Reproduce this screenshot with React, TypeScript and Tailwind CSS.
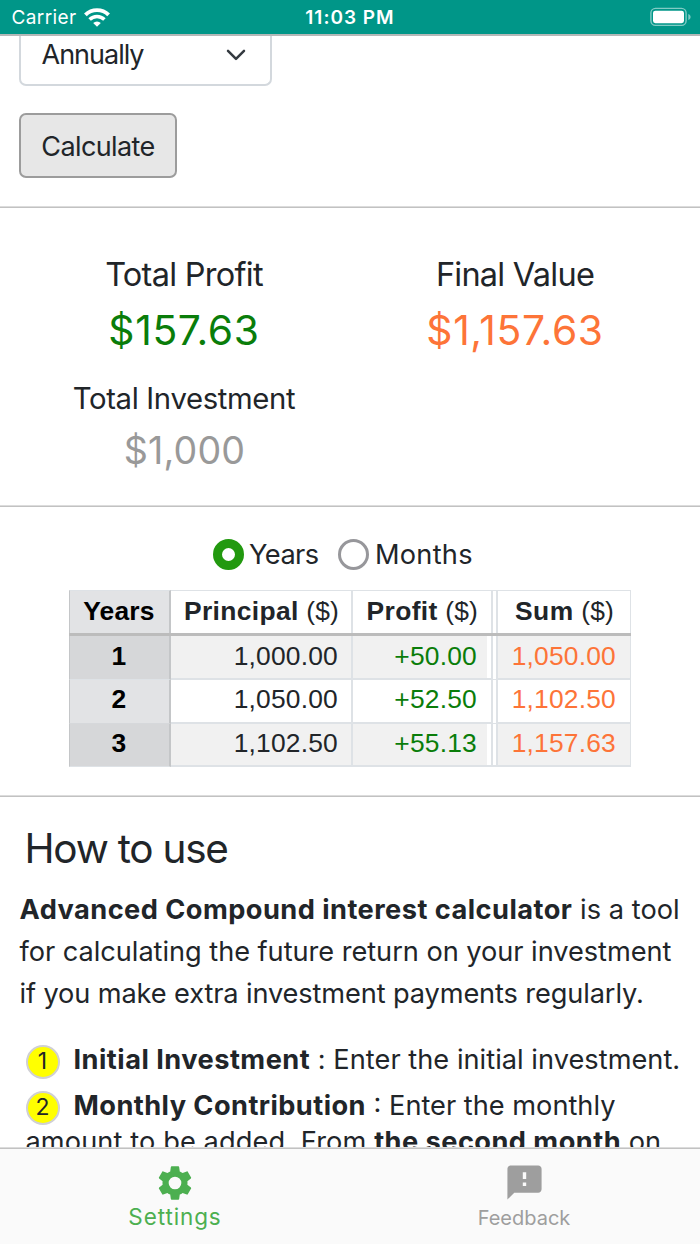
import { MdFeedback } from "react-icons/md";

type Row = { n: string; principal: string; profit: string; sum: string };

const rows: Row[] = [
  { n: "1", principal: "1,000.00", profit: "+50.00", sum: "1,050.00" },
  { n: "2", principal: "1,050.00", profit: "+52.50", sum: "1,102.50" },
  { n: "3", principal: "1,102.50", profit: "+55.13", sum: "1,157.63" },
];

function StatusBar() {
  return (
    <header className="grid h-9 shrink-0 grid-cols-3 items-center border-b-2 border-[#b4b8b8] bg-[#009688] text-[19px] text-white">
      <div className="flex items-center gap-2 pt-[2px] pl-[11.5px]">
        <span className="tracking-[0.4px]">Carrier</span>
        <svg width="26" height="19" viewBox="0 0 26 19" className="-mt-[2px] -ml-px" fill="none">
          <path d="M1.4 6.9a16.6 16.6 0 0 1 23.2 0" stroke="white" strokeWidth="3.9" />
          <path d="M5.6 11.5a10.5 10.5 0 0 1 14.8 0" stroke="white" strokeWidth="3.5" />
          <path d="M13 18.8l-3.8-3.7a5.4 5.4 0 0 1 7.6 0z" fill="white" />
        </svg>
      </div>
      <span className="pt-[3px] text-center text-[19px] font-semibold tracking-[1px]">11:03 PM</span>
      <svg width="42" height="20" viewBox="0 0 42 20" className="mr-[8px] justify-self-end" fill="none">
        <rect x="0.9" y="1.4" width="35.2" height="17" rx="4.6" stroke="white" strokeOpacity="0.5" strokeWidth="1.4" />
        <rect x="3" y="3.7" width="31" height="12.5" rx="2.4" fill="white" />
        <path d="M38.3 6.9c3 1 3 5 0 6z" fill="white" fillOpacity="0.5" />
      </svg>
    </header>
  );
}

function Rule() {
  return <div className="h-[2px] border-t border-b border-t-[#dcdcdc] border-b-[#c2c2c2]" />;
}

function Marker({ n }: { n: string }) {
  return (
    <span className="mt-[4px] flex h-[34px] w-[34px] items-center justify-center rounded-full border-2 border-[#d0d0d4] bg-[#ffff00] pb-px text-[23px]">
      {n}
    </span>
  );
}

function GearIcon() {
  return (
    <svg width="40" height="40" viewBox="0 0 24 24" fill="currentColor">
      <path
        fillRule="evenodd"
        d="M19.43 12.98c.04-.32.07-.64.07-.98s-.03-.66-.07-.98l2.11-1.65c.19-.15.24-.42.12-.64l-2-3.46c-.12-.22-.39-.3-.61-.22l-2.49 1c-.52-.4-1.08-.73-1.69-.98l-.38-2.65A.488.488 0 0 0 14 2h-4c-.25 0-.46.18-.49.42l-.38 2.65c-.61.25-1.17.59-1.69.98l-2.49-1c-.23-.09-.49 0-.61.22l-2 3.46c-.13.22-.07.49.12.64l2.11 1.65c-.04.32-.07.65-.07.98s.03.66.07.98l-2.11 1.65c-.19.15-.24.42-.12.64l2 3.46c.12.22.39.3.61.22l2.49-1c.52.4 1.08.73 1.69.98l.38 2.65c.03.24.24.42.49.42h4c.25 0 .46-.18.49-.42l.38-2.65c.61-.25 1.17-.59 1.69-.98l2.49 1c.23.09.49 0 .61-.22l2-3.46c.12-.22.07-.49-.12-.64l-2.11-1.65zM12 15.8a3.8 3.8 0 1 1 0-7.6 3.8 3.8 0 0 1 0 7.6z"
      />
    </svg>
  );
}

function Table() {
  return (
    <div className="mx-auto mt-[19px] w-[562px] font-['Liberation_Sans',sans-serif] text-[26.4px] tracking-[0.2px]">
      <div className="grid h-[46px] grid-cols-[102px_182px_140px_3px_135px] border-b-[3px] border-[#bcbcbc] leading-[40px]">
        <div className="border-t border-r-2 border-l border-[#c4c6c8] border-t-[#dee2e6] bg-[#e2e3e5] pr-px text-center font-bold text-black">Years</div>
        <div className="border-t border-r-2 border-[#dee2e6] pr-[12px] text-right">
          <b className="tracking-[0.35px]">Principal</b> ($)
        </div>
        <div className="border-t border-r-2 border-[#dee2e6] pr-[13px] text-right">
          <b className="tracking-[0.35px]">Profit</b> ($)
        </div>
        <div className="border-t border-[#dee2e6]" />
        <div className="border-t border-r border-l-2 border-[#dee2e6] pr-[16px] text-right">
          <b className="tracking-[0.5px]">Sum</b> ($)
        </div>
      </div>
      {rows.map((r, i) => {
        const odd = i % 2 === 0;
        return (
          <div
            key={r.n}
            className={`grid grid-cols-[102px_182px_140px_3px_135px] ${i === 2 ? "h-[43px] leading-[39px]" : i === 1 ? "h-[44px] leading-[39px]" : "h-[44px] leading-[40px]"}`}
          >
            <div
              className={`border-r-2 border-b border-l border-[#c4c6c8] pr-px text-center font-bold text-black ${odd ? "border-b-[#dee2e6] bg-[#d6d7d9]" : "border-b-[#d6d8db] bg-[#e2e3e5]"}`}
            >
              {r.n}
            </div>
            <div className={`border-r-2 border-b-2 border-[#dee2e6] pr-[13px] text-right ${odd ? "bg-[#f1f1f1]" : ""}`}>{r.principal}</div>
            <div className="border-r-2 border-b-2 border-[#dee2e6] pr-1 text-right text-[#0a7d0a]">
              <div className={`h-full pr-[10px] ${odd ? "bg-[#f1f1f1]" : ""}`}>{r.profit}</div>
            </div>
            <div className={`${i === 2 ? "border-b-2" : "border-b"} border-[#dee2e6]`} />
            <div className={`border-r border-b-2 border-l-2 border-[#dee2e6] pr-[14px] text-right text-[#fd7438] ${odd ? "bg-[#f1f1f1]" : ""}`}>
              {r.sum}
            </div>
          </div>
        );
      })}
    </div>
  );
}

export default function App() {
  return (
    <div className="flex h-[1244px] w-[700px] flex-col overflow-hidden bg-white font-['Inter',sans-serif] text-[#212529]">
      <StatusBar />

      <main className="min-h-0 flex-1 overflow-hidden whitespace-nowrap">
        <section className="flex h-[170px] flex-col items-start pl-[19px] text-[27px]">
          <div className="flex h-[50px] w-[253px] items-center justify-between rounded-b-[7px] border-x-2 border-b-2 border-[#d3d8dd] pr-[24px] pb-[9px] pl-[20.5px] tracking-[-1px]">
            Annually
            <svg width="20" height="12" viewBox="0 0 20 12" className="-mt-[2px]" fill="none">
              <path d="M2 1.8l8 8 8-8" stroke="#343a40" strokeWidth="2.5" strokeLinecap="round" strokeLinejoin="round" />
            </svg>
          </div>
          <button className="mt-[27px] h-[65px] w-[158px] rounded-[7px] border-2 border-[#9c9c9c] bg-[#e7e7e7] pt-[3px] tracking-[-0.6px]">
            Calculate
          </button>
        </section>
        <Rule />

        <section className="grid h-[297px] grid-cols-2 px-5 pt-[47px] text-center">
          <div>
            <div className="pr-[2px] text-[32.5px] leading-10 tracking-[-0.73px]">Total Profit</div>
            <div className="mt-[9px] pr-[2px] text-[40.8px] leading-[52px] tracking-[0.65px] text-[#0a7d0a]">$157.63</div>
            <div className="mt-[23px] pr-[2px] text-[29.3px] leading-10 tracking-[-0.34px]">Total Investment</div>
            <div className="mt-[8px] pr-px text-[37.6px] leading-[48px] tracking-[0.16px] text-[#999999]">$1,000</div>
          </div>
          <div>
            <div className="text-[32.5px] leading-10 tracking-[-0.76px]">Final Value</div>
            <div className="mt-[9px] text-[40.8px] leading-[52px] tracking-[0.64px] text-[#fd7438]">$1,157.63</div>
          </div>
        </section>
        <Rule />

        <section className="h-[288px] pt-[30px] text-[27.2px]">
          <div className="flex h-[34px] items-center pl-[212.5px]">
            <span className="h-[31px] w-[31px] rounded-full border-[9px] border-[#22990f] bg-white" />
            <span className="ml-[5.5px] w-[71px] pt-[2px] tracking-[-0.55px]">Years</span>
            <span className="ml-[18px] h-[31px] w-[31px] rounded-full border-[3px] border-[#97979b]" />
            <span className="ml-[6px] pt-[2px] tracking-[0.25px]">Months</span>
          </div>
          <Table />
        </section>
        <Rule />

        <section className="pt-[27px] text-[27.2px]">
          <h2 className="pl-[24.5px] text-[40.5px] leading-[50px] tracking-[-1.25px]">How to use</h2>
          <p className="mt-[15px] pl-[19.5px] leading-[42px]">
            <b className="font-bold tracking-[0.46px]">Advanced Compound interest calculator</b>
            <span className="tracking-[0.05px]"> is a tool</span>
            <br />
            <span className="tracking-[-0.04px]">for calculating the future return on your investment</span>
            <br />
            <span className="tracking-[-0.12px]">if you make extra investment payments regularly.</span>
          </p>
          <div className="mt-[22px] pl-[25.5px]">
            <div className="flex h-[46px] items-center">
              <Marker n="1" />
              <p className="ml-[14px]">
                <b className="tracking-[0.48px]">Initial Investment</b>
                <span className="tracking-[0.03px]"> : Enter the initial investment.</span>
              </p>
            </div>
            <div className="flex h-[46px] items-center">
              <Marker n="2" />
              <p className="ml-[14px]">
                <b className="tracking-[0.44px]">Monthly Contribution</b>
                <span> : Enter the monthly</span>
              </p>
            </div>
            <p className="-mt-[7px] leading-10">
              <span className="tracking-[0.1px]">amount to be added. From </span>
              <b className="tracking-[0.46px]">the second month</b> on
            </p>
          </div>
        </section>
      </main>

      <nav className="h-[97px] shrink-0 bg-[#fafafa]">
        <Rule />
        <div className="grid grid-cols-2">
          <div className="flex flex-col items-center pt-[14px] text-[#4caf50]">
            <GearIcon />
            <span className="text-[22.5px] leading-[28px] tracking-[0.89px]">Settings</span>
          </div>
          <div className="flex flex-col items-center pt-[13px] text-[#9e9e9e]">
            <MdFeedback size={41} className="-ml-px" />
            <span className="mt-px -ml-[2px] text-[20px] leading-[28px]">Feedback</span>
          </div>
        </div>
      </nav>
    </div>
  );
}
